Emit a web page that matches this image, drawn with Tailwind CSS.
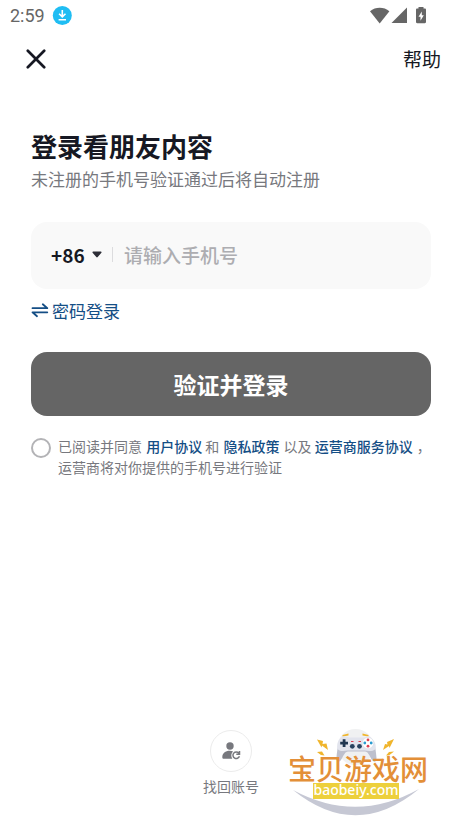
<!DOCTYPE html>
<html lang="zh-CN">
<head>
<meta charset="utf-8">
<meta name="viewport" content="width=device-width, initial-scale=1">
<title>登录看朋友内容</title>
<script src="https://cdn.jsdelivr.net/npm/@tailwindcss/browser@4"></script>
</head>
<body class="bg-white font-['Noto_Sans_CJK_SC',sans-serif] text-[#161823]">
<div class="relative flex min-h-screen flex-col">
  <!-- Status bar -->
  <div class="flex h-8 items-center justify-between pl-[10px] pr-[35px] text-[#666]">
    <div class="flex items-center gap-[7px]">
      <span class="font-['Roboto',sans-serif] text-[18px] leading-5">2:59</span>
      <svg class="size-5" viewBox="0 0 20 20" aria-hidden="true">
        <circle cx="10.300" cy="9.500" r="9.500" fill="#1fbdf3"/>
        <path d="M10.300 4v6.500M7.100 7.700l3.200 3.200 3.200-3.200M6.600 13.700H14" fill="none" stroke="#fff" stroke-width="1.600"/>
      </svg>
    </div>
    <svg class="h-[18px] w-[57px]" viewBox="0 0 57 18" fill="#666" aria-hidden="true">
      <path d="M0 4.200C5.600-.4 13.800-.4 19.400 4.200L9.700 16.400Z"/>
      <path d="M37 .500v15.500H21.500Z"/>
      <path fill-rule="evenodd" d="M48.500 0h5v1.500h1.300c.7 0 1.200.5 1.200 1.200v12.300c0 .7-.5 1.200-1.200 1.200h-7.600c-.7 0-1.200-.5-1.200-1.200V2.700c0-.7.5-1.200 1.200-1.200h1.300ZM51.800 4.500l-3.300 5.200h2v4l3.300-5.400h-2Z"/>
    </svg>
  </div>

  <header class="flex h-[54px] items-center justify-between pl-[26px] pr-[21px]">
    <button type="button" aria-label="关闭" class="block">
      <svg class="size-5" viewBox="0 0 20 20" fill="none" stroke="#161823" stroke-width="2.700" stroke-linecap="round"><path d="M1.800 1.800l16.400 16.400M18.200 1.800 1.800 18.200"/></svg>
    </button>
    <button type="button" class="text-[19px] leading-7">帮助</button>
  </header>

  <main class="px-[31px] pt-[42px]">
    <h1 class="text-[26px] font-bold leading-9">登录看朋友内容</h1>
    <p class="mt-[3px] text-[17px] leading-6 text-[#77787e]">未注册的手机号验证通过后将自动注册</p>

    <form>
      <div class="mt-[31px] flex h-[67px] items-center rounded-2xl bg-[#f9f9f9] px-5 pb-[2px]">
        <div class="relative flex w-[52px] items-center">
          <select aria-label="国家代码" class="h-8 w-full appearance-none bg-transparent text-[19px] font-bold leading-8"><option>+86</option></select>
          <svg class="pointer-events-none absolute right-[1px] h-[7px] w-[10px]" viewBox="0 0 10 7" fill="#2d2e37" aria-hidden="true"><path d="M1.200.5h7.600c.7 0 1 .7.600 1.200L5.700 6.100c-.4.500-1 .5-1.400 0L.600 1.700C.200 1.200.500.500 1.200.500Z"/></svg>
        </div>
        <span class="ml-[9px] mr-[11px] h-[15px] w-px bg-[#dcdcde]"></span>
        <input type="tel" aria-label="手机号" placeholder="请输入手机号" class="h-7 min-w-0 flex-1 bg-transparent text-[19px] font-medium leading-7 outline-none placeholder:text-[#adadb1]">
      </div>

      <a href="#password" class="mt-[10px] flex w-fit items-center gap-[3px] text-[17px] leading-6 text-[#144e85]">
        <svg class="h-[18px] w-[18px]" viewBox="0 0 18 18" fill="none" stroke="currentColor" stroke-width="1.800" stroke-linecap="round" stroke-linejoin="round" aria-hidden="true"><path d="M1.500 6.200h14.800L11.800 2.300M16.300 10.300H1.500l4.500 3.900"/></svg>
        <span>密码登录</span>
      </a>

      <button type="submit" class="mt-[29px] block h-16 w-full rounded-2xl bg-[#656565] text-[23px] font-bold text-white">验证并登录</button>

      <div class="mt-5 flex items-start gap-[7px] text-[14px] leading-[21px] text-[#77787e]">
        <input id="agree" type="checkbox" class="mt-[2px] size-5 shrink-0 appearance-none rounded-full border-2 border-[#b3b3b6] checked:border-[6px] checked:border-[#144e85]">
        <label for="agree" class="-mr-4">已阅读并同意 <a href="#terms" class="ml-px font-medium text-[#144e85]">用户协议</a> 和 <a href="#privacy" class="mx-px font-medium text-[#144e85]">隐私政策</a> 以及 <a href="#carrier" class="mr-px font-medium text-[#144e85]">运营商服务协议</a> ，<br>运营商将对你提供的手机号进行验证</label>
      </div>
    </form>
  </main>

  <footer class="mt-auto flex justify-center pb-[24px]">
    <button type="button" class="flex flex-col items-center gap-[3px] text-[14px] leading-[22px] text-[#77787e]">
      <span class="flex size-[42px] items-center justify-center rounded-full border border-[#ececec]">
        <svg class="h-5 w-5" viewBox="0 0 20 20" fill="#77787e" aria-hidden="true">
          <circle cx="9" cy="5" r="3.700"/>
          <path d="M1.300 16.300c0-4 3-6.500 7.500-6.500 1.400 0 2.300.2 3.300.6-2 1.600-2.400 4.800-.8 7.400H2.900c-1 0-1.600-.5-1.600-1.500Z"/>
          <path d="M18.400 15.300a3.300 3.300 0 1 1-.6-3.200M18.500 10v3.200h-3.200" fill="none" stroke="#77787e" stroke-width="1.500"/>
        </svg>
      </span>
      <span>找回账号</span>
    </button>
  </footer>

  <!-- Site badge floating over the page corner -->
  <svg class="absolute bottom-0 right-[30px] h-[97px] w-[148px]" viewBox="0 0 148 97" role="img" aria-label="宝贝游戏网 baobeiy.com">
    <circle cx="71.500" cy="23" r="18" fill="#f0f1f2"/>
    <path d="M9 66Q72 117 135 65Q72 100 9 66Z" fill="#c6c8d4"/>
    <g fill="#f0b52c">
      <path d="M33 15.500l6 1.500-.5 3 4-.5 1.500 6.500-6-4.500-.5 2ZM110 15l-7 3 .5 2.500-2.500-.500-2 6 6-4 .5 2ZM33 28l5-.5 2.500 4-3.500-.5ZM110 27.500l-5 .500-3 3.500 3.500-.5Z"/>
      <path d="M58.500 11l6-1.500V11.500l-6 1ZM84.500 11l-6-1.500V11.500l6 1Z"/>
    </g>
    <path d="M57 15h31c3 4 4 12 4.500 19 0 4.500-2.500 4.500-4.500 2-3-5-4-8.500-7-8.500H64c-3 0-4 3.500-7 8.500-2 2.500-4.500 2.500-4.500-2 .5-7 1.500-15 4.500-19Z" fill="#bec0cd"/>
    <path d="M56 14.500c3-2.500 6-2.500 9-1h15c3-1.500 6-1.500 8 1 3 3 4.500 7 3.500 10.500-3 3-8 2-11 1.500h-17c-3 .5-7 1.500-10-1.500-1-3.500 0-8 2.500-10.500Z" fill="#e2e4ed"/>
    <path d="M58.700 15.300h2.800v2.500h2.500v2.800h-2.500v2.500h-2.800v-2.500h-2.500v-2.800h2.500Z" fill="#203650"/>
    <g fill="#294360"><circle cx="68.300" cy="22.300" r="2.400"/><circle cx="75.500" cy="22.300" r="2.400"/></g>
    <circle cx="84" cy="19" r="5.300" fill="#fff"/>
    <g fill="#dd3f50"><circle cx="84" cy="15.900" r="1.400"/><circle cx="84" cy="22.200" r="1.400"/><path d="M67 17h2.500v1H67ZM74.500 17h2.500v1h-2.500Z"/></g>
    <g fill="#2a9bd0"><circle cx="80.800" cy="19" r="1.400"/><circle cx="87.200" cy="19" r="1.400"/></g>
    <text x="4" y="56" class="font-['Noto_Sans_CJK_SC',sans-serif] text-[28px] font-medium" fill="#e38f38">宝贝游戏网</text>
    <rect x="29" y="59" width="86" height="16" fill="#edd03c"/>
    <text x="72" y="71" text-anchor="middle" class="font-['Noto_Sans',sans-serif] text-[14px] font-medium" fill="#fff">baobeiy.com</text>
  </svg>
</div>
</body>
</html>
